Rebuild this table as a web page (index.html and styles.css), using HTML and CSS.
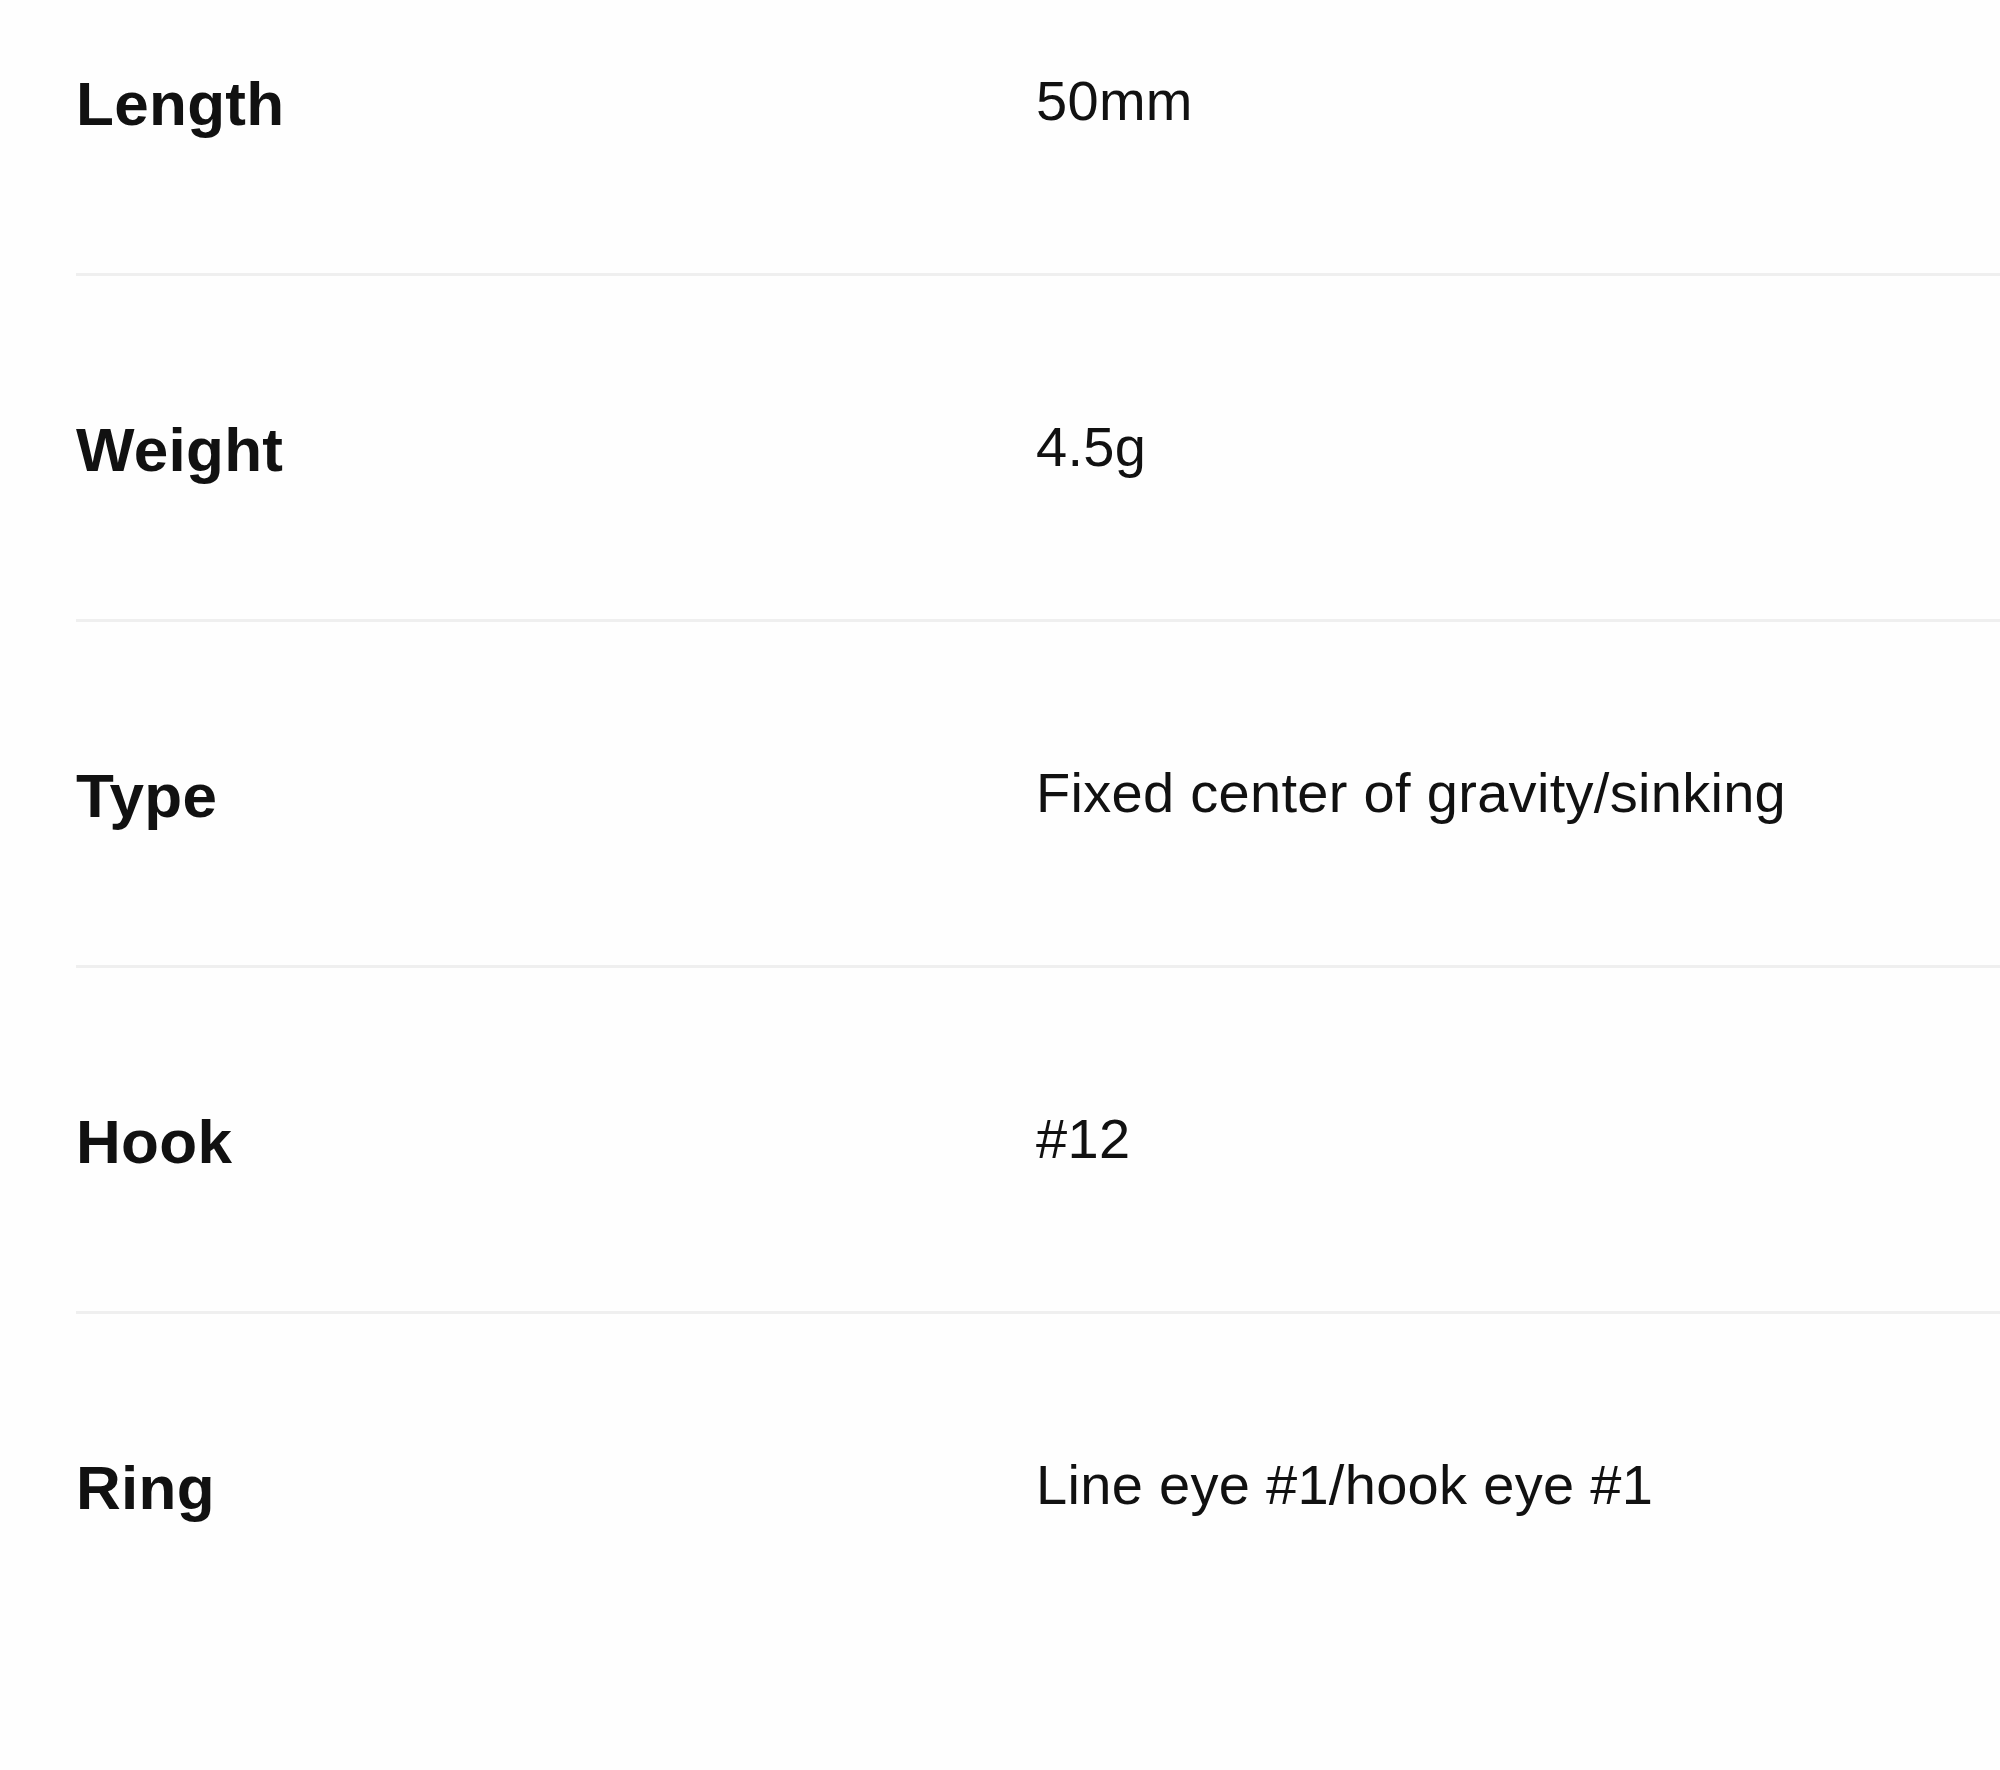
FILE: index.html
```html
<!DOCTYPE html>
<html lang="en">
<head>
<meta charset="utf-8">
<title>Spec</title>
<link rel="stylesheet" href="styles.css">
</head>
<body>
<div class="spec">
  <div class="row">
    <div class="label">Length</div>
    <div class="value">50mm</div>
  </div>
  <div class="row">
    <div class="label">Weight</div>
    <div class="value">4.5g</div>
  </div>
  <div class="row">
    <div class="label">Type</div>
    <div class="value">Fixed center of gravity/sinking</div>
  </div>
  <div class="row">
    <div class="label">Hook</div>
    <div class="value">#12</div>
  </div>
  <div class="row">
    <div class="label">Ring</div>
    <div class="value">Line eye #1/hook eye #1</div>
  </div>
</div>
</body>
</html>
```
FILE: styles.css
```css
html, body {
  margin: 0;
  padding: 0;
  background: #fefefe;
}
body {
  width: 2000px;
  height: 1770px;
  overflow: hidden;
  font-family: "Liberation Sans", Arial, sans-serif;
  color: #111111;
}
.spec {
  margin-left: 76px;
  display: flex;
  flex-direction: column;
}
.row {
  display: grid;
  grid-template-columns: 960px 1fr;
  align-items: baseline;
  padding: 134px 0 127px 0;
  border-bottom: 3px solid #efefef;
}
.row:first-child {
  padding-top: 64px;
}
.row:last-child {
  border-bottom: none;
}
.label {
  font-size: 62px;
  font-weight: bold;
  line-height: 80px;
  letter-spacing: 0.3px;
}
.value {
  font-size: 56px;
  line-height: 80px;
  position: relative;
  top: -5px;
  letter-spacing: 0.3px;
}
```
